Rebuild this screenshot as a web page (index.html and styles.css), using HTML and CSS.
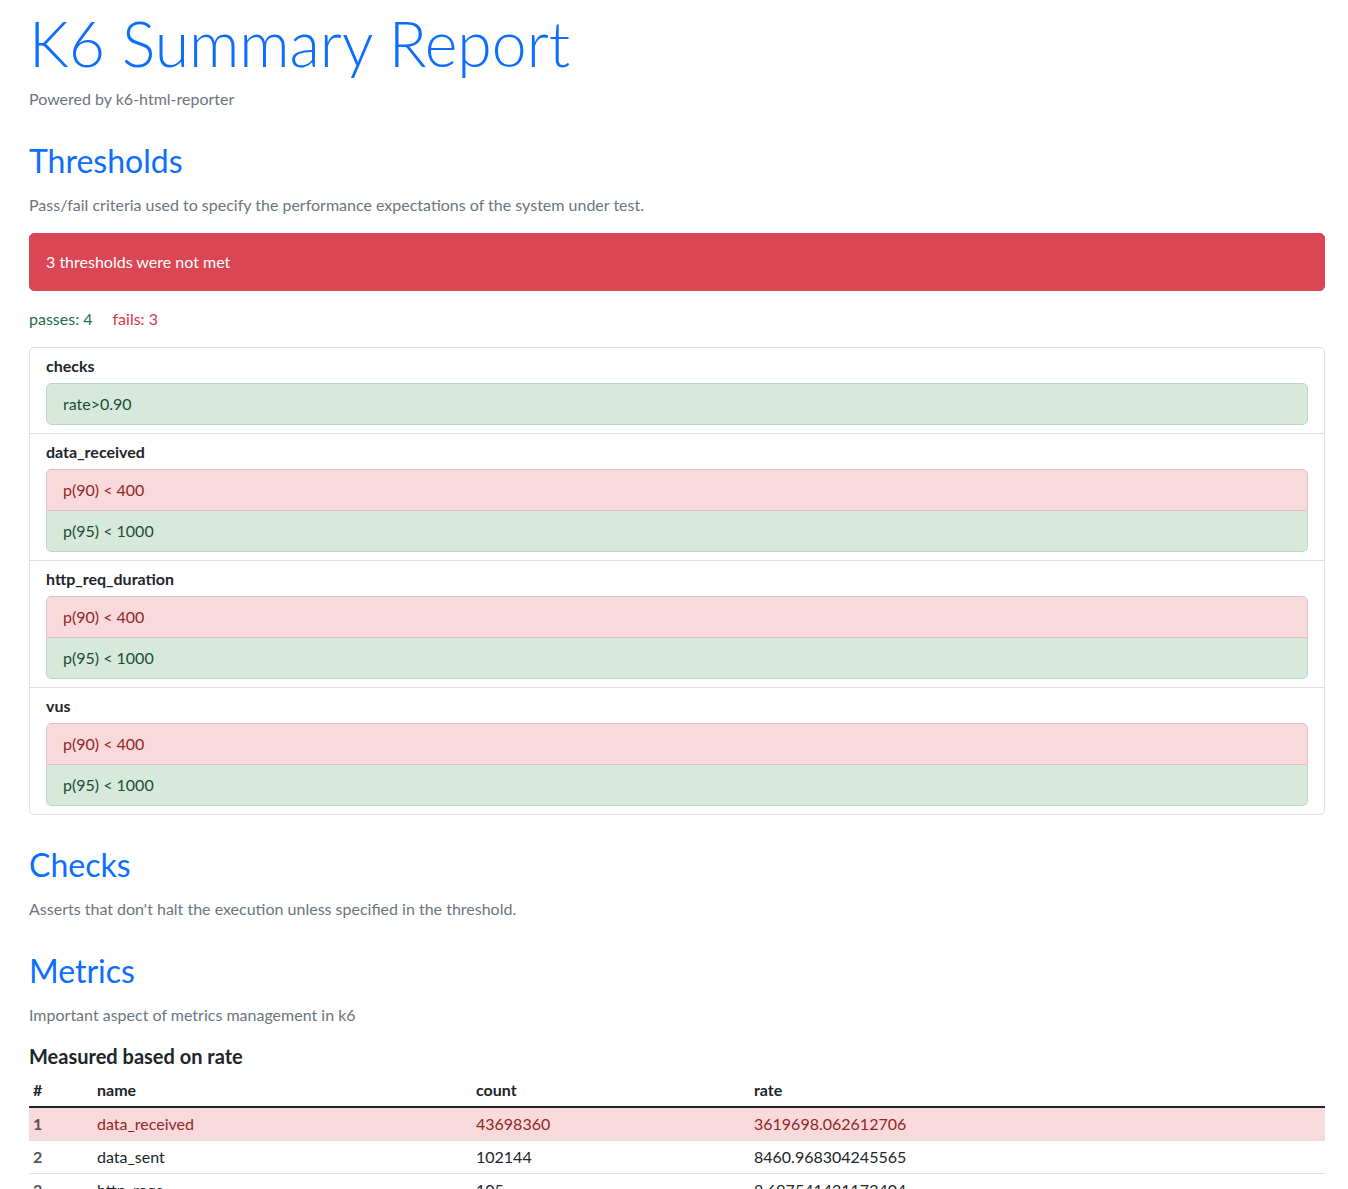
FILE: index.html
```html
<!DOCTYPE html>
<html lang="en">
<head>
<meta charset="utf-8">
<title>K6 Summary Report</title>
<link rel="stylesheet" href="styles.css">
</head>
<body>
<main class="page">
  <header class="hero">
    <h1 class="title">K6 Summary Report</h1>
    <p class="muted powered">Powered by k6-html-reporter</p>
  </header>

  <section class="block">
    <h2 class="block-title">Thresholds</h2>
    <p class="muted desc">Pass/fail criteria used to specify the performance expectations of the system under test.</p>
    <div class="alert">3 thresholds were not met</div>
    <div class="tally"><span class="pass">passes: 4</span><span class="fail">fails: 3</span></div>
    <ul class="card">
      <li class="group">
        <div class="group-name">checks</div>
        <ul class="rules">
          <li class="rule ok">rate&gt;0.90</li>
        </ul>
      </li>
      <li class="group">
        <div class="group-name">data_received</div>
        <ul class="rules">
          <li class="rule bad">p(90) &lt; 400</li>
          <li class="rule ok">p(95) &lt; 1000</li>
        </ul>
      </li>
      <li class="group">
        <div class="group-name">http_req_duration</div>
        <ul class="rules">
          <li class="rule bad">p(90) &lt; 400</li>
          <li class="rule ok">p(95) &lt; 1000</li>
        </ul>
      </li>
      <li class="group">
        <div class="group-name">vus</div>
        <ul class="rules">
          <li class="rule bad">p(90) &lt; 400</li>
          <li class="rule ok">p(95) &lt; 1000</li>
        </ul>
      </li>
    </ul>
  </section>

  <section class="block">
    <h2 class="block-title">Checks</h2>
    <p class="muted desc last">Asserts that don't halt the execution unless specified in the threshold.</p>
  </section>

  <section class="block">
    <h2 class="block-title">Metrics</h2>
    <p class="muted desc wide">Important aspect of metrics management in k6</p>
    <h5 class="sub">Measured based on rate</h5>
    <table class="metrics">
      <thead>
        <tr><th class="c-idx">#</th><th class="c-name">name</th><th class="c-count">count</th><th>rate</th></tr>
      </thead>
      <tbody>
        <tr class="bad-row"><th>1</th><td>data_received</td><td>43698360</td><td>3619698.062612706</td></tr>
        <tr><th>2</th><td>data_sent</td><td>102144</td><td>8460.968304245565</td></tr>
        <tr><th>3</th><td>http_reqs</td><td>105</td><td>8.697541421172404</td></tr>
        <tr><th>4</th><td>iterations</td><td>105</td><td>8.697541421172404</td></tr>
      </tbody>
    </table>
  </section>
</main>
</body>
</html>
```
FILE: styles.css
```css
* { box-sizing: border-box; }
html, body { margin: 0; padding: 0; }
body {
  font-family: Lato, "Open Sans", "Liberation Sans", sans-serif;
  font-size: 16px;
  line-height: 24px;
  color: #212529;
  background: #fff;
}
.page { padding: 0 23px 40px 29px; }
p { margin: 0; }
h1, h2, h5 { margin: 0; }
.muted { color: #6c757d; }

.title {
  margin-top: 5px;
  font-size: 62.5px;
  line-height: 76px;
  font-weight: 300;
  color: #0d6efd;
}
.powered { margin-top: 6px; }

.block { padding-top: 31px; }
.block-title {
  height: 38px;
  font-size: 32px;
  line-height: 38px;
  font-weight: 400;
  color: #0d6efd;
  margin-bottom: 13px;
}
.desc { margin-bottom: 16px; }
.desc.wide { margin-bottom: 17px; }
.desc.last { margin-bottom: 0; }

.alert {
  background: #da4653;
  color: #fff;
  border: 1px solid #da4653;
  border-radius: 5px;
  padding: 16px;
  margin-bottom: 16px;
}
.tally { display: flex; gap: 20px; margin-bottom: 16px; }
.pass { color: #1b7048; }
.fail { color: #dc3545; }

.card {
  list-style: none;
  margin: 0;
  padding: 0;
  border: 1px solid #dfdfdf;
  border-radius: 5px;
}
.group {
  padding: 8px 16px;
  border-top: 1px solid #dfdfdf;
}
.group:first-child { border-top: 0; }
.group-name { font-weight: 700; margin-top: -2px; margin-bottom: 5px; }
.rules {
  list-style: none;
  margin: 0;
  padding: 0;
  border-radius: 5px;
  overflow: hidden;
}
.rule {
  padding: 8px 16px;
  border: 1px solid;
}
.rule + .rule { border-top: 0; }
.rule:first-child { border-top-left-radius: 5px; border-top-right-radius: 5px; }
.rule:last-child { border-bottom-left-radius: 5px; border-bottom-right-radius: 5px; }
.rule.ok { background: #d6e9da; border-color: #bfd3c3; color: #1e4d34; }
.rule.bad { background: #f8dadd; border-color: #e3bfc3; color: #93261f; }

.sub {
  font-size: 20px;
  line-height: 24px;
  font-weight: 700;
  margin-bottom: 6px;
}
.metrics {
  width: 100%;
  border-collapse: collapse;
  table-layout: fixed;
}
.metrics th, .metrics td {
  text-align: left;
  padding: 4px;
  border-bottom: 1px solid #dee2e6;
}
.metrics thead th { border-bottom: 2px solid #212529; font-weight: 700; }
.metrics tbody th { font-weight: 700; color: #555; }
.c-idx { width: 64px; }
.c-name { width: 379px; }
.c-count { width: 278px; }
.bad-row th, .bad-row td { background: #f8dadd; color: #93261f; }
.bad-row th { color: #555; }
```
